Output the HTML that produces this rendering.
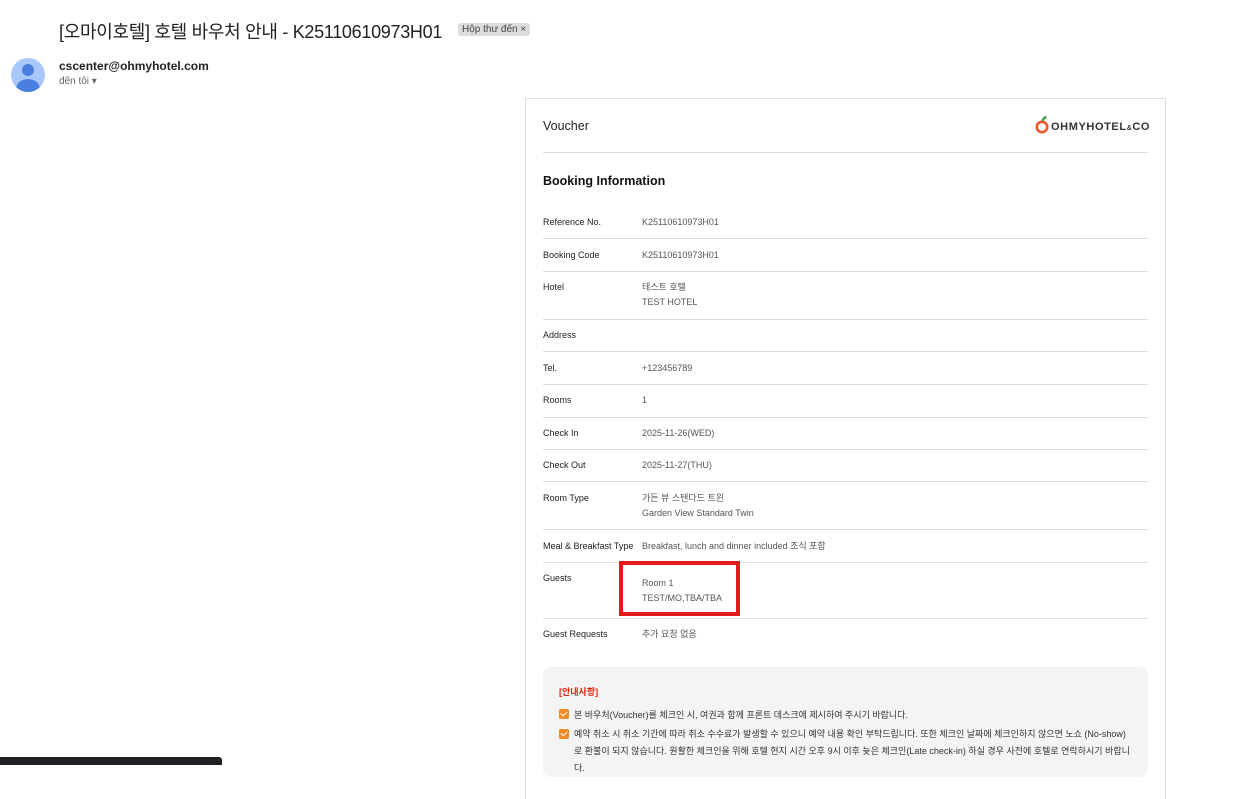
<!DOCTYPE html>
<html><head><meta charset="utf-8"><style>
body{margin:0;width:1242px;height:765px;overflow:hidden;background:#fff;font-family:"Liberation Sans","Noto Sans CJK KR",sans-serif;position:relative;color:#222}
.a{position:absolute;white-space:nowrap}
.l{position:absolute;left:543px;font-size:9px;color:#222}
.v{position:absolute;left:642px;font-size:9px;color:#555;line-height:15px}
.hr{position:absolute;left:543px;width:605px;height:1px;background:#ddd}
.cb{display:inline-block;width:10px;height:10px;background:#f08a24;border-radius:2px;vertical-align:-1px;margin-right:5px;position:relative}
.cb:after{content:"";position:absolute;left:3px;top:1px;width:3px;height:5px;border:solid #fff;border-width:0 1.5px 1.5px 0;transform:rotate(45deg)}
</style></head><body>
<div class="a" style="left:59px;top:18px;font-size:18px;letter-spacing:-0.3px;color:#222">[오마이호텔] 호텔 바우처 안내 - K25110610973H01</div>
<div class="a" style="left:458px;top:23px;font-size:10px;background:#ddd;color:#444;padding:1px 4px;border-radius:3px">Hộp thư đến&nbsp;×</div>
<div class="a" style="left:11px;top:58px;width:34px;height:34px;border-radius:50%;background:#a8c7fa;overflow:hidden">
<div style="position:absolute;left:11px;top:6px;width:12px;height:12px;border-radius:50%;background:#4a7fe0"></div>
<div style="position:absolute;left:5px;top:21px;width:24px;height:20px;border-radius:50%;background:#4a7fe0"></div></div>
<div class="a" style="left:59px;top:59px;font-size:12px;font-weight:bold;color:#222">cscenter@ohmyhotel.com</div>
<div class="a" style="left:59px;top:76px;font-size:10px;color:#666">đến tôi ▾</div>

<div class="a" style="left:525px;top:98px;width:639px;height:700px;border:1px solid #ddd;border-bottom:none"></div>
<div class="a" style="left:543px;top:119px;font-size:12.5px;color:#222">Voucher</div>
<div class="a" style="left:1035px;top:115px;width:16px;height:20px">
<svg width="16" height="20" viewBox="0 0 16 20"><circle cx="7" cy="12" r="5.2" fill="none" stroke="#f05a28" stroke-width="2.6"/><path d="M7.5 6 Q8.5 2.5 11.5 2" stroke="#3a9a3a" stroke-width="2.2" fill="none"/></svg></div>
<div class="a" style="left:1051px;top:121px;font-size:11px;font-weight:bold;color:#333;letter-spacing:0.6px">OHMYHOTEL<span style="font-size:7px">&amp;</span>CO</div>
<div class="hr" style="top:152px"></div>
<div class="a" style="left:543px;top:174px;font-size:12.5px;font-weight:bold;color:#111">Booking Information</div>

<div class="l" style="top:217px">Reference No.</div><div class="v" style="top:215px">K25110610973H01</div>
<div class="hr" style="top:238px"></div>
<div class="l" style="top:250px">Booking Code</div><div class="v" style="top:248px">K25110610973H01</div>
<div class="hr" style="top:271px"></div>
<div class="l" style="top:282px">Hotel</div><div class="v" style="top:280px">테스트 호텔<br>TEST HOTEL</div>
<div class="hr" style="top:319px"></div>
<div class="l" style="top:330px">Address</div>
<div class="hr" style="top:351px"></div>
<div class="l" style="top:363px">Tel.</div><div class="v" style="top:361px">+123456789</div>
<div class="hr" style="top:384px"></div>
<div class="l" style="top:395px">Rooms</div><div class="v" style="top:393px">1</div>
<div class="hr" style="top:417px"></div>
<div class="l" style="top:428px">Check In</div><div class="v" style="top:426px">2025-11-26(WED)</div>
<div class="hr" style="top:449px"></div>
<div class="l" style="top:460px">Check Out</div><div class="v" style="top:458px">2025-11-27(THU)</div>
<div class="hr" style="top:481px"></div>
<div class="l" style="top:493px">Room Type</div><div class="v" style="top:491px">가든 뷰 스탠다드 트윈<br>Garden View Standard Twin</div>
<div class="hr" style="top:529px"></div>
<div class="l" style="top:541px">Meal &amp; Breakfast Type</div><div class="v" style="top:539px">Breakfast, lunch and dinner included 조식 포함</div>
<div class="hr" style="top:562px"></div>
<div class="l" style="top:573px">Guests</div><div class="v" style="top:576px">Room 1<br>TEST/MO,TBA/TBA</div>
<div class="a" style="left:619px;top:561px;width:113px;height:47px;border:4px solid #e21b1b"></div>
<div class="hr" style="top:618px"></div>
<div class="l" style="top:629px">Guest Requests</div><div class="v" style="top:627px">추가 요청 없음</div>

<div class="a" style="left:543px;top:667px;width:605px;height:110px;background:#f4f4f4;border-radius:8px"></div>
<div class="a" style="left:559px;top:685px;font-size:9px;font-weight:bold;color:#e8200c">[안내사항]</div>
<div class="a" style="left:559px;top:708px;font-size:9px;color:#333"><span class="cb"></span>본 바우처(Voucher)를 체크인 시, 여권과 함께 프론트 데스크에 제시하여 주시기 바랍니다.</div>
<div class="a" style="left:559px;top:726px;font-size:9px;color:#333;line-height:17px;white-space:normal;width:572px"><span class="cb" style="position:absolute;left:0;top:3px"></span><div style="padding-left:15px;word-break:break-all">예약 취소 시 취소 기간에 따라 취소 수수료가 발생할 수 있으니 예약 내용 확인 부탁드립니다. 또한 체크인 날짜에 체크인하지 않으면 노쇼 (No-show)로 환불이 되지 않습니다. 원활한 체크인을 위해 호텔 현지 시간 오후 9시 이후 늦은 체크인(Late check-in) 하실 경우 사전에 호텔로 연락하시기 바랍니다.</div></div>
<div class="a" style="left:0;top:757px;width:222px;height:8px;background:#1f2124;border-radius:0 3px 0 0"></div>
</body></html>
